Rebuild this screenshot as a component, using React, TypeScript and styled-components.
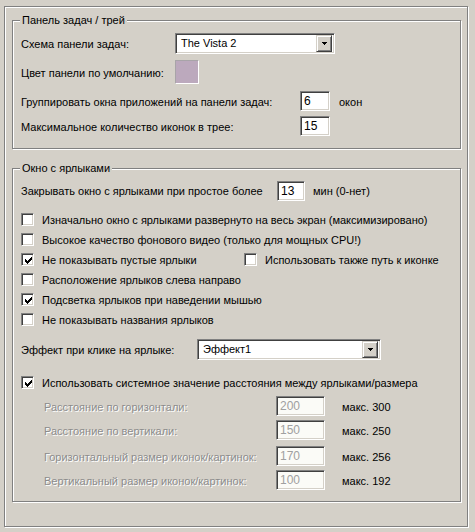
import * as React from 'react';
import styled, { createGlobalStyle } from 'styled-components';

const GlobalStyle = createGlobalStyle`
  body {
    margin: 0;
    background: #d4d0c8;
  }
  * {
    box-sizing: border-box;
  }
`;

const Page = styled.div`
  width: 475px;
  height: 532px;
  padding: 6px 0 0 4px;
  background: #d4d0c8;
  font-family: "Liberation Sans", Arial, sans-serif;
  font-size: 11px;
  color: #000;
`;

const Frame = styled.div`
  width: 464px;
  height: 521px;
  border: 1px solid #808080;
  box-shadow: inset 1px 1px #fff, 1px 1px #fff;
  overflow: hidden;
`;

const GroupBox = styled.div<{ $mt: number; $h: number }>`
  position: relative;
  margin: ${p => p.$mt}px 0 0 7px;
  width: 449px;
  height: ${p => p.$h}px;
  padding-left: 8px;
  border: 1px solid #808080;
  box-shadow: inset 1px 1px #fff, 1px 1px #fff;
`;

const Caption = styled.span`
  position: absolute;
  top: -7px;
  left: 7px;
  padding: 0 2px;
  line-height: 13px;
  background: #d4d0c8;
  white-space: nowrap;
`;

const Row = styled.div<{ $mt: number; $h: number }>`
  display: flex;
  align-items: center;
  margin-top: ${p => p.$mt}px;
  height: ${p => p.$h}px;
`;

const Label = styled.span<{ $w: number; $indent?: number; $disabled?: boolean }>`
  flex: none;
  width: ${p => p.$w}px;
  padding-left: ${p => p.$indent || 0}px;
  padding-top: 1px;
  white-space: nowrap;
  color: ${p => (p.$disabled ? '#8c8c8c' : '#000')};
  text-shadow: ${p => (p.$disabled ? '1px 1px #fff' : 'none')};
`;

const Suffix = styled.span<{ $ml: number }>`
  margin-left: ${p => p.$ml}px;
  padding-top: 1px;
  white-space: nowrap;
`;

const Sunken = styled.div`
  border: 1px solid;
  border-color: #808080 #fff #fff #808080;
  box-shadow: inset 1px 1px #404040, inset -1px -1px #d4d0c8;
`;

const Combo = styled(Sunken)<{ $w: number }>`
  display: flex;
  align-items: center;
  width: ${p => p.$w}px;
  height: 21px;
  padding: 2px;
  background: #fff;
`;

const ComboText = styled.span`
  flex: 1;
  padding-left: 3px;
  line-height: 17px;
`;

const DropButton = styled.div`
  display: flex;
  align-items: center;
  justify-content: center;
  width: 16px;
  height: 17px;
  background: #d4d0c8;
  border: 1px solid;
  border-color: #d4d0c8 #404040 #404040 #d4d0c8;
  box-shadow: inset 1px 1px #fff, inset -1px -1px #808080;
`;

const Swatch = styled.div<{ $color: string }>`
  width: 24px;
  height: 24px;
  background: ${p => p.$color};
  border: 1px solid;
  border-color: #a8a4a8 #fff #fff #a8a4a8;
`;

const Edit = styled(Sunken)<{ $w: number; $disabled?: boolean }>`
  width: ${p => p.$w}px;
  height: 20px;
  padding: 2px 3px 0 3px;
  line-height: 15px;
  font-size: 12px;
  background: ${p => (p.$disabled ? '#fbfbf7' : '#fff')};
  color: ${p => (p.$disabled ? '#a0a0a0' : '#000')};
`;

const CheckItem = styled.label<{ $w?: number }>`
  display: flex;
  align-items: center;
  flex: none;
  width: ${p => (p.$w ? `${p.$w}px` : 'auto')};
  white-space: nowrap;
`;

const CheckBox = styled(Sunken)`
  flex: none;
  width: 13px;
  height: 13px;
  padding: 3px;
  background: #fff;
  line-height: 0;
`;

const CheckText = styled.span`
  margin-left: 8px;
  padding-top: 1px;
`;

const Arrow = () => (
  <svg width="5" height="3" viewBox="0 0 5 3" shapeRendering="crispEdges">
    <path d="M0 0h5v1h-5z M1 1h3v1h-3z M2 2h1v1h-1z" fill="#000" />
  </svg>
);

const Tick = () => (
  <svg width="7" height="7" viewBox="0 0 7 7" shapeRendering="crispEdges">
    <path
      d="M6 0h1v1h-1z M5 1h2v1h-2z M0 2h1v1h-1z M4 2h3v1h-3z M0 3h2v1h-2z M3 3h3v1h-3z M0 4h5v1h-5z M1 5h3v1h-3z M2 6h1v1h-1z"
      fill="#000"
    />
  </svg>
);

const Check: React.FC<{ checked?: boolean; text: string; w?: number }> = ({ checked, text, w }) => (
  <CheckItem $w={w}>
    <CheckBox>{checked && <Tick />}</CheckBox>
    <CheckText>{text}</CheckText>
  </CheckItem>
);

const spacing = [
  { label: 'Расстояние по горизонтали:', value: '200', max: 'макс. 300', mt: 4 },
  { label: 'Расстояние по вертикали:', value: '150', max: 'макс. 250', mt: 4 },
  { label: 'Горизонтальный размер иконок/картинок:', value: '170', max: 'макс. 256', mt: 6 },
  { label: 'Вертикальный размер иконок/картинок:', value: '100', max: 'макс. 192', mt: 4 },
];

const App: React.FC = () => {
  return (
    <Page>
      <GlobalStyle />
      <Frame>
        <GroupBox $mt={13} $h={129}>
          <Caption>Панель задач / трей</Caption>
          <Row $mt={12} $h={21}>
            <Label $w={154}>Схема панели задач:</Label>
            <Combo $w={160}>
              <ComboText>The Vista 2</ComboText>
              <DropButton><Arrow /></DropButton>
            </Combo>
          </Row>
          <Row $mt={6} $h={24}>
            <Label $w={154}>Цвет панели по умолчанию:</Label>
            <Swatch $color="#bca9bd" />
          </Row>
          <Row $mt={7} $h={20}>
            <Label $w={279}>Группировать окна приложений на панели задач:</Label>
            <Edit $w={30}>6</Edit>
            <Suffix $ml={9}>окон</Suffix>
          </Row>
          <Row $mt={5} $h={20}>
            <Label $w={279}>Максимальное количество иконок в трее:</Label>
            <Edit $w={30}>15</Edit>
          </Row>
        </GroupBox>

        <GroupBox $mt={19} $h={334}>
          <Caption>Окно с ярлыками</Caption>
          <Row $mt={11} $h={21}>
            <Label $w={256}>Закрывать окно с ярлыками при простое более</Label>
            <Edit $w={28}>13</Edit>
            <Suffix $ml={8}>мин (0-нет)</Suffix>
          </Row>
          <Row $mt={8} $h={20}>
            <Check text="Изначально окно с ярлыками развернуто на весь экран (максимизировано)" />
          </Row>
          <Row $mt={0} $h={20}>
            <Check text="Высокое качество фонового видео (только для мощных CPU!)" />
          </Row>
          <Row $mt={0} $h={20}>
            <Check checked w={223} text="Не показывать пустые ярлыки" />
            <Check text="Использовать также путь к иконке" />
          </Row>
          <Row $mt={0} $h={20}>
            <Check text="Расположение ярлыков слева направо" />
          </Row>
          <Row $mt={0} $h={20}>
            <Check checked text="Подсветка ярлыков при наведении мышью" />
          </Row>
          <Row $mt={0} $h={20}>
            <Check text="Не показывать названия ярлыков" />
          </Row>
          <Row $mt={10} $h={21}>
            <Label $w={176}>Эффект при клике на ярлыке:</Label>
            <Combo $w={184}>
              <ComboText>Эффект1</ComboText>
              <DropButton><Arrow /></DropButton>
            </Combo>
          </Row>
          <Row $mt={12} $h={20}>
            <Check checked text="Использовать системное значение расстояния между ярлыками/размера" />
          </Row>
          {spacing.map(s => (
            <Row key={s.label} $mt={s.mt} $h={20}>
              <Label $w={255} $indent={23} $disabled>{s.label}</Label>
              <Edit $w={49} $disabled>{s.value}</Edit>
              <Suffix $ml={17}>{s.max}</Suffix>
            </Row>
          ))}
        </GroupBox>
      </Frame>
    </Page>
  );
};

export default App;
